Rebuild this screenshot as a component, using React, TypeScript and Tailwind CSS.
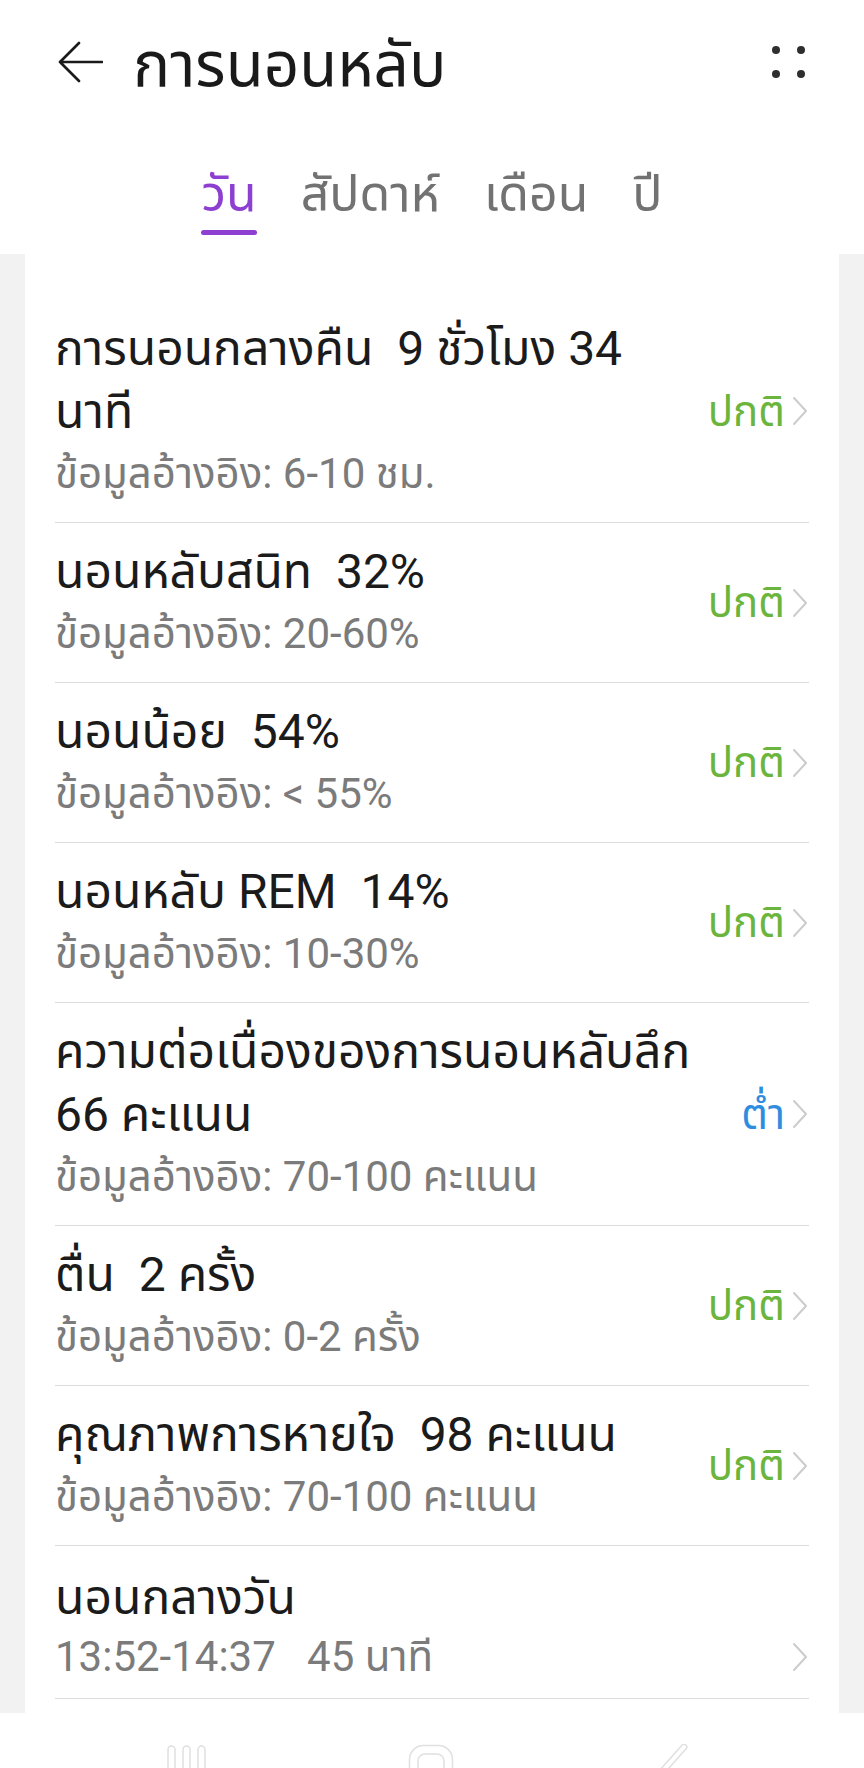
import React from "react"

type Row = {
    title: React.ReactNode
    sub: React.ReactNode
    status?: string
    tone?: "ok" | "low"
}

const NB = "\u00a0\u00a0"

const rows: Row[] = [
    { title: <>การนอนกลางคืน{NB}9 ชั่วโมง 34<br />นาที</>, sub: "ข้อมูลอ้างอิง: 6-10 ชม.", status: "ปกติ", tone: "ok" },
    { title: <>นอนหลับสนิท{NB}32%</>, sub: "ข้อมูลอ้างอิง: 20-60%", status: "ปกติ", tone: "ok" },
    { title: <>นอนน้อย{NB}54%</>, sub: "ข้อมูลอ้างอิง: < 55%", status: "ปกติ", tone: "ok" },
    { title: <>นอนหลับ REM{NB}14%</>, sub: "ข้อมูลอ้างอิง: 10-30%", status: "ปกติ", tone: "ok" },
    { title: <>ความต่อเนื่องของการนอนหลับลึก<br />66 คะแนน</>, sub: "ข้อมูลอ้างอิง: 70-100 คะแนน", status: "ต่ำ", tone: "low" },
    { title: <>ตื่น{NB}2 ครั้ง</>, sub: "ข้อมูลอ้างอิง: 0-2 ครั้ง", status: "ปกติ", tone: "ok" },
    { title: <>คุณภาพการหายใจ{NB}98 คะแนน</>, sub: "ข้อมูลอ้างอิง: 70-100 คะแนน", status: "ปกติ", tone: "ok" },
]

function Chevron() {
    return (
        <svg width="18" height="30" viewBox="0 0 18 30" fill="none" className="shrink-0">
            <path d="M3 2 L15 15 L3 28" stroke="#cccccc" strokeWidth="2" strokeLinecap="round" strokeLinejoin="round" />
        </svg>
    )
}

function BackArrow() {
    return (
        <svg width="46" height="42" viewBox="0 0 46 42" fill="none">
            <path d="M45 21 H3 M22 2 L3 21 L22 40" stroke="#1a1a1a" strokeWidth="2.6" strokeLinecap="round" strokeLinejoin="round" />
        </svg>
    )
}

function MoreDots() {
    return (
        <div className="grid grid-cols-2 gap-x-[17px] gap-y-[16px]">
            <span className="w-2 h-2 rounded-full bg-[#2e2e2e]" />
            <span className="w-2 h-2 rounded-full bg-[#2e2e2e]" />
            <span className="w-2 h-2 rounded-full bg-[#2e2e2e]" />
            <span className="w-2 h-2 rounded-full bg-[#2e2e2e]" />
        </div>
    )
}

export default function App() {
    return (
        <div className="w-[864px] h-[1768px] flex flex-col bg-[#f2f2f2] overflow-hidden font-[Roboto,'Noto_Sans_Thai',sans-serif]">
            {/* Header */}
            <div className="bg-white h-[254px] shrink-0 flex flex-col">
                <div className="h-[124px] flex items-center pl-[57px] pr-[59px]">
                    <BackArrow />
                    <h1 className="ml-[30px] mt-[6px] text-[62px] text-[#1a1a1a] leading-none">การนอนหลับ</h1>
                    <div className="ml-auto">
                        <MoreDots />
                    </div>
                </div>

                {/* Tabs */}
                <div className="mt-[35px] flex justify-center gap-[44px]">
                    <div className="flex flex-col items-center">
                        <span className="text-[50px] leading-[70px] text-[#8d3fd1]">วัน</span>
                        <span className="mt-[1px] h-[5px] w-full rounded-full bg-[#8d3fd1]" />
                    </div>
                    <span className="text-[50px] leading-[70px] text-[#727272]">สัปดาห์</span>
                    <span className="text-[50px] leading-[70px] text-[#727272]">เดือน</span>
                    <span className="text-[50px] leading-[70px] text-[#727272]">ปี</span>
                </div>
            </div>

            {/* Card */}
            <div className="flex-1 mx-[25px] bg-white px-[30px] pt-[46px]">
                {rows.map((r, i) => (
                    <div key={i} className="flex items-center justify-between border-b border-[#dddddd] py-[17px]">
                        <div className="flex flex-col">
                            <div className="text-[48px] leading-[63px] text-[#1b1b1b]">{r.title}</div>
                            <div className="text-[42px] leading-[62px] text-[#7b7b7b]">{r.sub}</div>
                        </div>
                        <div className="flex items-center gap-[6px]">
                            <span className={r.tone === "low" ? "text-[42px] text-[#2f8de0]" : "text-[42px] text-[#6cb53d]"}>
                                {r.status}
                            </span>
                            <Chevron />
                        </div>
                    </div>
                ))}

                {/* Nap row */}
                <div className="flex justify-between border-b border-[#dddddd] pt-[20px] pb-[14px]">
                    <div className="flex flex-col">
                        <div className="text-[48px] leading-[63px] text-[#1b1b1b]">นอนกลางวัน</div>
                        <div className="text-[42px] leading-[55px] text-[#7b7b7b] whitespace-pre">13:52-14:37   45 นาที</div>
                    </div>
                    <div className="flex items-end pb-[12px]">
                        <Chevron />
                    </div>
                </div>
            </div>

            {/* System nav bar */}
            <div className="h-[55px] shrink-0 bg-white overflow-hidden flex justify-between pt-[31px] pl-[166px] pr-[176px]">
                <svg width="42" height="40" viewBox="0 0 42 40" fill="none">
                    <rect x="2" y="2" width="7" height="40" rx="3.5" stroke="#e0e0e0" strokeWidth="1.5" />
                    <rect x="17" y="2" width="7" height="40" rx="3.5" stroke="#e0e0e0" strokeWidth="1.5" />
                    <rect x="32" y="2" width="7" height="40" rx="3.5" stroke="#e0e0e0" strokeWidth="1.5" />
                </svg>
                <svg width="46" height="46" viewBox="0 0 46 46" fill="none">
                    <rect x="1.5" y="1.5" width="43" height="43" rx="14" stroke="#e0e0e0" strokeWidth="1.5" />
                    <rect x="10" y="10" width="26" height="26" rx="7" stroke="#e0e0e0" strokeWidth="1.5" />
                </svg>
                <svg width="34" height="46" viewBox="0 0 34 46" fill="none">
                    <path d="M30 3 L6 30 L30 57" stroke="#e0e0e0" strokeWidth="7" strokeLinecap="round" strokeLinejoin="round" />
                    <path d="M30 3 L6 30 L30 57" stroke="#ffffff" strokeWidth="4" strokeLinecap="round" strokeLinejoin="round" />
                </svg>
            </div>
        </div>
    )
}
